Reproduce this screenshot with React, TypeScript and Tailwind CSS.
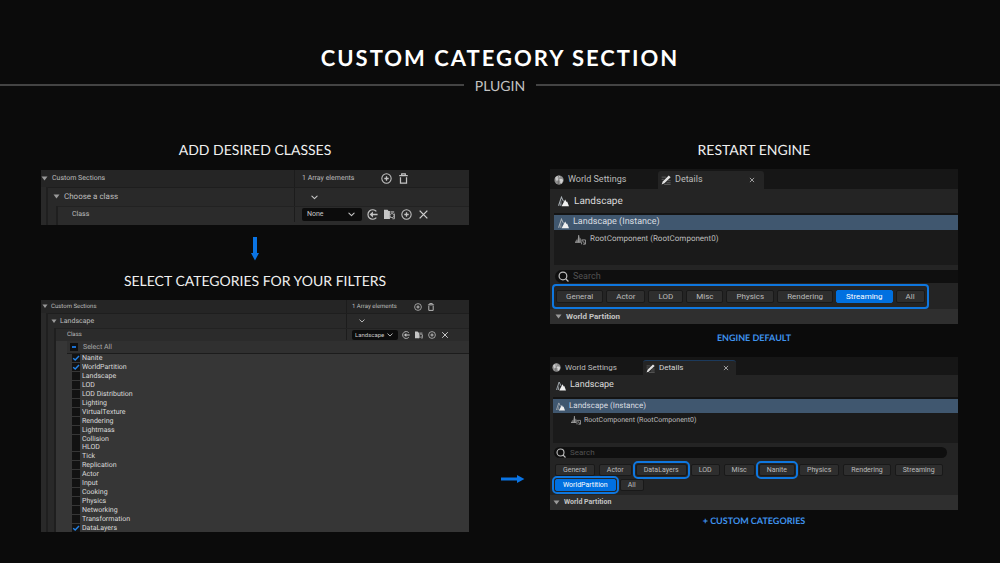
import type { ReactNode } from "react";

type Size = "lg" | "sm";

/* ---------- icons ---------- */

function Triangle({ className }: { className: string }) {
  return (
    <svg viewBox="0 0 8 6" className={className} fill="#9a9a9a" aria-hidden="true">
      <path d="M0.6 0.6h6.8L4 5.2z" />
    </svg>
  );
}

function Chevron({ className }: { className: string }) {
  return (
    <svg viewBox="0 0 8 8" className={className} fill="none" stroke="#c8c8c8" strokeWidth="1.2" strokeLinecap="round" strokeLinejoin="round" aria-hidden="true">
      <path d="M1 2.4 4 5.4 7 2.4" />
    </svg>
  );
}

function PlusCircle() {
  return (
    <svg viewBox="0 0 16 16" className="size-full" fill="none" stroke="#c4c4c4" strokeWidth="1.5" aria-hidden="true">
      <circle cx="8" cy="8" r="6.8" />
      <path d="M8 4.8v6.4M4.8 8h6.4" strokeWidth="1.9" />
    </svg>
  );
}

function Trash() {
  return (
    <svg viewBox="0 0 16 16" className="size-full" fill="none" stroke="#c4c4c4" strokeWidth="1.8" aria-hidden="true">
      <path d="M1.8 3.8h12.4M5.4 3.4V1.2h5.2v2.2M3.6 6v8.8h8.8V6" />
    </svg>
  );
}

function UseSelected() {
  return (
    <svg viewBox="0 0 16 16" className="size-full" fill="none" stroke="#c4c4c4" strokeWidth="1.7" aria-hidden="true">
      <path d="M13.6 3.6A6.9 6.9 0 1 0 13.6 12.4" />
      <path d="M15.4 8H6" strokeWidth="2.2" />
      <path d="M8.6 3.8 3.8 8l4.8 4.2z" fill="#c4c4c4" stroke="none" />
    </svg>
  );
}

function BrowseFolder() {
  return (
    <svg viewBox="0 0 16 16" className="size-full" aria-hidden="true">
      <path d="M0 1h5.2l1.4 2h2v11.6H0z" fill="#c4c4c4" />
      <path d="M9.4 3h5.4v2.6H9.4z" fill="#8a8a8a" />
      <circle cx="11.6" cy="9.6" r="3" fill="#2a2a2a" stroke="#b4b4b4" strokeWidth="1.3" />
      <path d="m9.4 11.8-2 2.6M15.2 6.6v7.6h-3" fill="none" stroke="#b4b4b4" strokeWidth="1.3" />
    </svg>
  );
}

function Cross() {
  return (
    <svg viewBox="0 0 16 16" className="size-full" fill="none" stroke="#cfcfcf" strokeWidth="1.9" aria-hidden="true">
      <path d="M2.4 2.4l11.2 11.2M13.6 2.4 2.4 13.6" />
    </svg>
  );
}

function Globe({ className }: { className: string }) {
  return (
    <svg viewBox="0 0 16 16" className={className} aria-hidden="true">
      <circle cx="8" cy="8" r="7.4" fill="#8f8f8f" />
      <path d="M2 4.4C4 1.8 7 1 9.4 1.4L8.6 4 6.2 5.4l.6 2.4L5 9.6 3 8.2z" fill="#c9c9c9" />
      <path d="M9.4 6.2h3.8l1.4 2.6-2.6 4.8-2.2-1.2.2-2.8-1.8-1.6z" fill="#d2d2d2" />
      <path d="M7.4 1.2 6.6 4.6M6.8 8.6v6" stroke="#555" strokeWidth="1" />
    </svg>
  );
}

function Pencil({ className }: { className: string }) {
  return (
    <svg viewBox="0 0 16 16" className={className} aria-hidden="true">
      <path d="M1 3.4h7M1 7h3.4M10.6 9h4.8M9 12.4h6.4M5 15h10.4" stroke="#6d6d6d" strokeWidth="1.2" />
      <path d="M12.4 0.8 15.4 3.6 5.4 13 1 15l1.8-4.6z" fill="#e2e2e2" />
    </svg>
  );
}

function Mountains({ className }: { className: string }) {
  return (
    <svg viewBox="0 0 16 16" className={className} aria-hidden="true">
      <path d="M0.8 14.2 5 1.6l3 6.2" fill="none" stroke="#a9b0b6" strokeWidth="1.5" />
      <path d="M5 5.4v8.8H2.4z" fill="#8b9298" />
      <path d="M5.2 15 10.4 5.2l2 3.6.9-.9L16 15z" fill="#f0f0f0" />
    </svg>
  );
}

function RootIcon({ className }: { className: string }) {
  return (
    <svg viewBox="0 0 16 16" className={className} aria-hidden="true">
      <path d="M0.2 12 2 7.6l1.2 1.6L5.4 1.6 7.2 7l1-1.4L10 12z" fill="#6f6f6f" />
      <path d="M5.4 1.6V12M0 12h8.4" stroke="#a8a8a8" strokeWidth="1.3" />
      <path d="M10 8.6h5.2v6.2h-3.4M9.4 8.4l5.4 6M9.6 12v3" fill="none" stroke="#a0a0a0" strokeWidth="1.3" />
    </svg>
  );
}

function SearchIcon({ className }: { className: string }) {
  return (
    <svg viewBox="0 0 16 16" className={className} fill="none" stroke="#bdbdbd" strokeWidth="1.8" aria-hidden="true">
      <circle cx="7.2" cy="7.2" r="5.6" />
      <path d="m11.2 11.2 4 4" />
    </svg>
  );
}

/* ---------- array property panels ---------- */

const guide = "w-[7px] shrink-0 border-r-2 border-[#1f1f1f]";

function IconButton({ label, size, children }: { label: string; size: Size; children: ReactNode }) {
  return (
    <button type="button" aria-label={label} className={size === "lg" ? "size-[11px] shrink-0" : "size-[8px] shrink-0"}>
      {children}
    </button>
  );
}

function ClassSelect({ id, size, value }: { id: string; size: Size; value: string }) {
  return (
    <div className={size === "lg" ? "relative w-[60px]" : "relative w-[46px]"}>
      <select
        id={id}
        defaultValue={value}
        className={
          size === "lg"
            ? "block h-[13px] w-full appearance-none rounded-[2px] bg-[#0c0c0c] pl-[5px] text-[7px] leading-[13px] text-[#c8c8c8]"
            : "block h-[10px] w-full appearance-none rounded-[2px] bg-[#0c0c0c] pl-[3px] text-[6px] leading-[10px] text-[#c8c8c8]"
        }
      >
        <option>{value}</option>
      </select>
      <span className={size === "lg" ? "pointer-events-none absolute inset-y-0 right-[7px] flex items-center" : "pointer-events-none absolute inset-y-0 right-[5px] flex items-center"}>
        <Chevron className={size === "lg" ? "size-[7px]" : "size-[6px]"} />
      </span>
    </div>
  );
}

function ArrayPanel({ size, id, element, value, children }: { size: Size; id: string; element: string; value: string; children?: ReactNode }) {
  const lg = size === "lg";
  const small = lg ? "text-[7px]" : "text-[6px]";
  const valueCell = lg
    ? "flex w-[175px] shrink-0 items-center self-stretch border-l border-[#1c1c1c] pl-[7px]"
    : "flex w-[123px] shrink-0 items-center self-stretch border-l border-[#1c1c1c] pl-[5px]";
  return (
    <section className="bg-[#292929] font-['Roboto',sans-serif] text-[#bcbcbc]">
      <div className={`flex items-center bg-[#252525] ${lg ? "h-[17px]" : "h-[13px]"}`}>
        <div className={`flex flex-1 items-center ${small} ${lg ? "gap-[4px]" : "gap-[3px] pl-px"}`}>
          <Triangle className={lg ? "w-[7px]" : "w-[6px]"} />
          Custom Sections
        </div>
        <div className={valueCell}>
          <span className={`${small} ${lg ? "w-[79px]" : "w-[62px]"}`}>1 Array elements</span>
          <div className={lg ? "flex gap-[6px]" : "flex gap-[5px]"}>
            <IconButton label="Add element" size={size}><PlusCircle /></IconButton>
            <IconButton label="Remove all elements" size={size}><Trash /></IconButton>
          </div>
        </div>
      </div>
      <div className="flex">
        <div className={guide} />
        <div className="min-w-0 flex-1">
          <div className={`flex items-center border-t border-[#1e1e1e] ${lg ? "h-[19px]" : "h-[15px]"}`}>
            <div className={lg ? "flex flex-1 items-center gap-[4px] pl-[5px] text-[8px]" : "flex flex-1 items-center gap-[3px] pl-[3px] text-[7px]"}>
              <Triangle className={lg ? "w-[7px]" : "w-[6px]"} />
              {element}
            </div>
            <div className={valueCell}>
              <button type="button" aria-label="Element options" className={lg ? "pl-[9px]" : "pl-[7px]"}>
                <Chevron className={lg ? "size-[7px]" : "size-[6px]"} />
              </button>
            </div>
          </div>
          <div className="flex">
            <div className={lg ? "w-[10px] shrink-0 border-r-2 border-[#1f1f1f]" : "w-[8px] shrink-0 border-r-2 border-[#1f1f1f]"} />
            <div className="min-w-0 flex-1">
              <div className={`flex items-center border-t border-[#222222] bg-[#2b2b2b] ${lg ? "h-[19px] pb-[3px]" : "h-[13px] pb-px"}`}>
                <label htmlFor={id} className={`flex-1 ${small} ${lg ? "pl-[14px]" : "pl-[11px]"}`}>Class</label>
                <div className={valueCell}>
                  <ClassSelect id={id} size={size} value={value} />
                  <div className={lg ? "flex gap-[6px] pl-[5px]" : "flex gap-[5px] pl-[4px]"}>
                    <IconButton label="Use selected asset" size={size}><UseSelected /></IconButton>
                    <IconButton label="Browse to asset" size={size}><BrowseFolder /></IconButton>
                    <IconButton label="Create new" size={size}><PlusCircle /></IconButton>
                    <IconButton label="Clear" size={size}><Cross /></IconButton>
                  </div>
                </div>
              </div>
              {children}
            </div>
          </div>
        </div>
      </div>
    </section>
  );
}

const categories = [
  "Nanite", "WorldPartition", "Landscape", "LOD", "LOD Distribution", "Lighting", "VirtualTexture",
  "Rendering", "Lightmass", "Collision", "HLOD", "Tick", "Replication", "Actor", "Input", "Cooking",
  "Physics", "Networking", "Transformation", "DataLayers",
];
const enabled = ["Nanite", "WorldPartition", "DataLayers"];

function CategoryList() {
  return (
    <div className="bg-[#363636]">
      <div className="ml-[11px] flex h-[13px] items-center border-b border-[#1c1c1c] bg-[#303030] pl-[3px]">
        <label className="flex items-center gap-[5px] text-[7px] text-[#a8a8a8]">
          <span className="relative flex size-[8px]">
            <input type="checkbox" className="size-[8px] appearance-none bg-[#101010]" />
            <span className="pointer-events-none absolute inset-x-[2px] top-[3px] h-[2px] bg-[#1a6fcf]" />
          </span>
          Select All
        </label>
      </div>
      <div className="grid h-[178px] auto-rows-fr pl-[16px]">
        {categories.map((name) => (
          <label key={name} className="flex items-center gap-[2px] text-[7px] leading-[8px] text-[#dadada]">
            <span className="relative flex size-[8px]">
              <input type="checkbox" defaultChecked={enabled.includes(name)} className="peer size-[8px] appearance-none bg-[#121212]" />
              <svg viewBox="0 0 8 8" className="pointer-events-none absolute inset-0 hidden size-[8px] peer-checked:block" fill="none" stroke="#2383e8" strokeWidth="1.4" aria-hidden="true">
                <path d="M1.2 4.2 3.2 6 7 2" />
              </svg>
            </span>
            {name}
          </label>
        ))}
      </div>
    </div>
  );
}

/* ---------- details panels ---------- */

function Filter({ size, name, active, ring }: { size: Size; name: string; active?: boolean; ring?: boolean }) {
  const box = size === "lg" ? "h-[13px] px-[9px] text-[8px] leading-[11px]" : "h-[12px] px-[7px] text-[7px] leading-[10px]";
  const tone = active ? "border-[#0070e0] bg-[#0070e0] text-white" : "border-[#191919] bg-[#2e2e2e] text-[#bcbcbc]";
  return (
    <button type="button" className={`shrink-0 rounded-[2px] border ${box} ${tone} ${ring ? "outline-2 outline-offset-1 outline-[#0f77df]" : ""}`}>
      {name}
    </button>
  );
}

function DetailsPanel({ size, children }: { size: Size; children: ReactNode }) {
  const lg = size === "lg";
  const text = lg ? "text-[9px]" : "text-[8px]";
  return (
    <section className="bg-[#242424] font-['Roboto',sans-serif] text-[#bcbcbc]">
      <div className={`flex items-end bg-[#161616] ${text} ${lg ? "h-[20px]" : "h-[18px]"}`}>
        <button type="button" className={`flex items-center gap-[4px] ${lg ? "h-[18px] w-[108px] pl-[4px]" : "h-[15px] w-[93px] pl-[2px]"}`}>
          <Globe className={lg ? "size-[10px]" : "size-[9px]"} />
          World Settings
        </button>
        <div className={`flex items-center rounded-t-[3px] bg-[#242424] ${lg ? "h-[18px] w-[106px] pr-[9px] pl-[3px]" : "h-[15px] w-[93px] border-t border-[#1c3a5c] pr-[7px] pl-[3px] text-[#d4d4d4]"}`}>
          <button type="button" className="flex flex-1 items-center gap-[4px]">
            <Pencil className={lg ? "size-[10px]" : "size-[9px]"} />
            Details
          </button>
          <button type="button" aria-label="Close tab" className="size-[6px]"><Cross /></button>
        </div>
      </div>
      <div className={`flex items-center text-[#dadada] ${lg ? "h-[24px] gap-[5px] pl-[8px] text-[10px]" : "h-[22px] gap-[4px] pl-[6px] text-[9px]"}`}>
        <Mountains className={lg ? "size-[11px]" : "size-[10px]"} />
        Landscape
      </div>
      <div className={`border-t-2 border-[#141414] bg-[#1a1a1a] ${text} ${lg ? "ml-[4px] h-[52px]" : "ml-[3px] h-[46px]"}`}>
        <div className={`flex items-center bg-[#40576f] text-[#d8dce0] ${lg ? "h-[15px] gap-[4px] pt-px pl-[4px]" : "h-[14px] gap-[4px] pl-[3px]"}`}>
          <Mountains className={lg ? "size-[11px]" : "size-[9px]"} />
          Landscape (Instance)
        </div>
        <div className={`flex items-center ${lg ? "h-[18px] gap-[4px] pl-[21px] text-[8px]" : "h-[14px] gap-[3px] pl-[18px] text-[7px]"}`}>
          <RootIcon className={lg ? "size-[11px]" : "size-[10px]"} />
          RootComponent (RootComponent0)
        </div>
      </div>
      <label className={`flex items-center bg-[#0f0f0f] ${text} ${lg ? "mt-[5px] ml-[5px] h-[13px] gap-[4px] rounded-l-full pl-[3px]" : "mt-[4px] mr-[11px] ml-[4px] h-[11px] gap-[4px] rounded-full pl-[2px]"}`}>
        <SearchIcon className={lg ? "size-[11px]" : "size-[10px]"} />
        <input type="text" aria-label="Search" placeholder="Search" className="min-w-0 flex-1 bg-transparent outline-none placeholder:text-[#525252]" />
      </label>
      {children}
      <button type="button" className={`flex w-full items-center bg-[#2f2f2f] font-bold text-[#c4c4c4] ${lg ? "h-[15px] gap-[4px] pl-[5px] text-[8px]" : "h-[15px] gap-[4px] pl-[3px] text-[7px]"}`}>
        <Triangle className="w-[7px]" />
        World Partition
      </button>
    </section>
  );
}

/* ---------- page ---------- */

function Heading({ children }: { children: ReactNode }) {
  return <h2 className="text-center text-[14px] leading-[20px] text-[#f0f0f0]">{children}</h2>;
}

function Caption({ children }: { children: ReactNode }) {
  return <p className="text-center text-[9px] leading-[21px] font-bold text-[#3f93ee]">{children}</p>;
}

export default function App() {
  return (
    <div className="min-h-screen bg-[#0b0b0b] font-['Lato',sans-serif] [text-rendering:geometricPrecision]">
      <header className="pt-[44px]">
        <h1 className="text-center text-[22px] leading-[28px] font-bold tracking-[2px] text-white">CUSTOM CATEGORY SECTION</h1>
        <div className="mt-[3px] flex items-center">
          <div className="h-[2px] flex-1 bg-[#444444]" />
          <p className="w-[72px] pt-[2px] text-center text-[14px] leading-[18px] text-[#c4c4c4]">PLUGIN</p>
          <div className="h-[2px] flex-1 bg-[#444444]" />
        </div>
      </header>

      <main className="mt-[45px] grid grid-cols-[minmax(0,428fr)_minmax(0,81fr)_minmax(0,408fr)] pr-[42px] pl-[41px]">
        <div>
          <Heading>ADD DESIRED CLASSES</Heading>
          <div className="mt-[10px]">
            <ArrayPanel size="lg" id="class-empty" element="Choose a class" value="None" />
          </div>
          <svg viewBox="0 0 8 24" className="mx-auto mt-[12px] h-[24px] w-[8px]" fill="#0a74e4" aria-hidden="true">
            <path d="M2 0h4v16h2L4 23.4 0 16h2z" />
          </svg>
          <div className="mt-[10px]">
            <Heading>SELECT CATEGORIES FOR YOUR FILTERS</Heading>
          </div>
          <div className="mt-[9px]">
            <ArrayPanel size="sm" id="class-landscape" element="Landscape" value="Landscape">
              <CategoryList />
            </ArrayPanel>
          </div>
        </div>

        <svg viewBox="0 0 24 8" className="mb-[49px] ml-[32px] h-[8px] w-[24px] self-end" fill="#0a74e4" aria-hidden="true">
          <path d="M0 2.4h16V0l7.4 4L16 8V5.6H0z" />
        </svg>

        <div>
          <Heading>RESTART ENGINE</Heading>
          <div className="mt-[9px]">
            <DetailsPanel size="lg">
              <div className="mt-px mr-[29px] ml-[2px] flex h-[25px] items-center gap-[3px] rounded-[4px] border-2 border-[#0f77df] px-[2px]">
                <Filter size="lg" name="General" />
                <Filter size="lg" name="Actor" />
                <Filter size="lg" name="LOD" />
                <Filter size="lg" name="Misc" />
                <Filter size="lg" name="Physics" />
                <Filter size="lg" name="Rendering" />
                <Filter size="lg" name="Streaming" active />
                <Filter size="lg" name="All" />
              </div>
            </DetailsPanel>
          </div>
          <div className="mt-[3px]">
            <Caption>ENGINE DEFAULT</Caption>
          </div>
          <div className="mt-[9px]">
            <DetailsPanel size="sm">
              <div className="flex flex-wrap gap-x-[4px] gap-y-[3px] pt-[6px] pr-[10px] pb-[4px] pl-[5px]">
                <Filter size="sm" name="General" />
                <Filter size="sm" name="Actor" />
                <Filter size="sm" name="DataLayers" ring />
                <Filter size="sm" name="LOD" />
                <Filter size="sm" name="Misc" />
                <Filter size="sm" name="Nanite" ring />
                <Filter size="sm" name="Physics" />
                <Filter size="sm" name="Rendering" />
                <Filter size="sm" name="Streaming" />
                <Filter size="sm" name="WorldPartition" active ring />
                <Filter size="sm" name="All" />
              </div>
            </DetailsPanel>
          </div>
          <Caption>+ CUSTOM CATEGORIES</Caption>
        </div>
      </main>
    </div>
  );
}
